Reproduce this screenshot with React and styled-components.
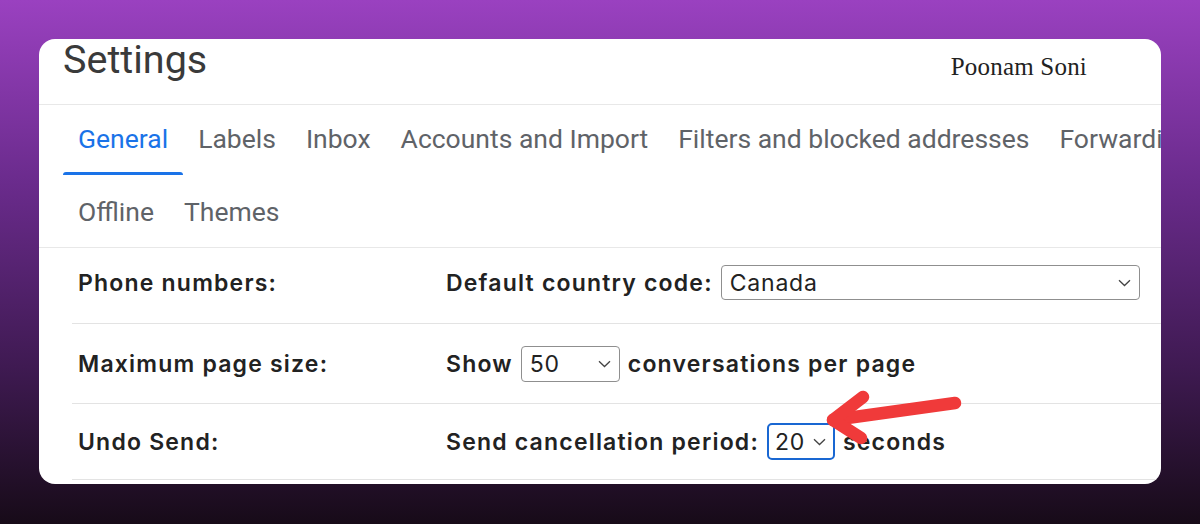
import styled, { createGlobalStyle } from 'styled-components'

const GlobalStyle = createGlobalStyle`
    html, body {
        margin: 0;
        padding: 0;
    }
    body {
        width: 1200px;
        height: 524px;
        overflow: hidden;
        background: linear-gradient(180deg, #9a41c0 0%, #6a2b8c 35%, #3f1a52 70%, #170b18 100%);
        font-family: Inter, "Noto Sans", sans-serif;
    }
`

const Page = styled.div`
    box-sizing: border-box;
    height: 524px;
    padding: 39px 39px 0 39px;
`

const Card = styled.div`
    position: relative;
    height: 445px;
    background: #fff;
    border-radius: 16px;
    overflow: hidden;
`

const Header = styled.div`
    height: 65px;
    display: flex;
    justify-content: space-between;
    align-items: flex-start;
    border-bottom: 1px solid #e8e8e8;
    padding-left: 24px;
    padding-right: 74px;
`

const Title = styled.h1`
    margin: 0;
    font-family: Roboto, sans-serif;
    font-weight: 400;
    font-size: 39.5px;
    line-height: 42px;
    color: #3a3a3a;
`

const Signature = styled.span`
    margin-top: 14px;
    font-family: "Liberation Serif", serif;
    font-size: 25px;
    letter-spacing: 0.2px;
    color: #222;
`

const TabRow = styled.div`
    box-sizing: border-box;
    display: flex;
    height: ${p => p.$height}px;
    padding-left: 24px;
    white-space: nowrap;
    border-bottom: ${p => (p.$divider ? '1px solid #e8e8e8' : 'none')};
`

const Tab = styled.div`
    box-sizing: border-box;
    position: relative;
    display: flex;
    align-items: center;
    padding: 0 15px ${p => p.$lift || 0}px;
    font-family: Roboto, sans-serif;
    font-size: 26.5px;
    color: ${p => (p.$active ? '#1a73e8' : '#5f6368')};

    &::after {
        content: '';
        display: ${p => (p.$active ? 'block' : 'none')};
        position: absolute;
        left: 0;
        right: 0;
        bottom: 0;
        height: 3px;
        border-radius: 3px 3px 0 0;
        background: #1a73e8;
    }
`

const Rows = styled.div`
    padding-left: 33px;
`

const Row = styled.div`
    box-sizing: border-box;
    display: flex;
    align-items: center;
    height: ${p => p.$height}px;
    padding: 0 0 ${p => p.$pb || 0}px 6px;
    border-bottom: 1px solid #e3e3e3;
`

const Label = styled.div`
    width: 368px;
    flex-shrink: 0;
    font-size: 23px;
    font-weight: 600;
    letter-spacing: 1.2px;
    color: #222;
`

const Content = styled.div`
    display: flex;
    align-items: center;
    gap: 8px;
    font-size: 23px;
    font-weight: 600;
    letter-spacing: 1.2px;
    color: #222;
    white-space: nowrap;
`

const SelectBox = styled.div`
    box-sizing: border-box;
    display: flex;
    align-items: center;
    justify-content: space-between;
    width: ${p => p.$width}px;
    height: ${p => p.$height || 36}px;
    padding: 0 ${p => (p.$focus ? 7 : 8)}px 0 ${p => (p.$focus ? 6 : 8)}px;
    border: ${p => (p.$focus ? '2px solid #1967d2' : '1px solid #8f8f8f')};
    border-radius: ${p => (p.$focus ? 5 : 4)}px;
    font-size: 23px;
    font-weight: 400;
    letter-spacing: 0.8px;
    color: #222;
`

const Chevron = () => (
    <svg width="13" height="8" viewBox="0 0 13 8">
        <path d="M1 1.2 L6.5 6.5 L12 1.2" fill="none" stroke="#444" strokeWidth="1.3" />
    </svg>
)

const Select = ({ value, ...rest }) => (
    <SelectBox {...rest}>
        <span>{value}</span>
        <Chevron />
    </SelectBox>
)

const Arrow = styled.svg`
    position: absolute;
    left: 780px;
    top: 350px;
`

const tabs = ['General', 'Labels', 'Inbox', 'Accounts and Import', 'Filters and blocked addresses', 'Forwarding and POP/IMAP']

function App() {
    return (
        <Page>
            <GlobalStyle />
            <Card>
                <Header>
                    <Title>Settings</Title>
                    <Signature>Poonam Soni</Signature>
                </Header>
                <TabRow $height={70}>
                    {tabs.map((t, i) => (
                        <Tab key={t} $active={i === 0} $lift={4}>{t}</Tab>
                    ))}
                </TabRow>
                <TabRow $height={73} $divider>
                    <Tab>Offline</Tab>
                    <Tab>Themes</Tab>
                </TabRow>
                <Rows>
                    <Row $height={76} $pb={6}>
                        <Label>Phone numbers:</Label>
                        <Content>
                            Default country code:
                            <Select value="Canada" $width={419} $height={35} />
                        </Content>
                    </Row>
                    <Row $height={80}>
                        <Label>Maximum page size:</Label>
                        <Content>
                            Show
                            <Select value="50" $width={99} />
                            conversations per page
                        </Content>
                    </Row>
                    <Row $height={76}>
                        <Label>Undo Send:</Label>
                        <Content>
                            Send cancellation period:
                            <Select value="20" $width={68} $height={37} $focus />
                            seconds
                        </Content>
                    </Row>
                    <Row $height={40} />
                </Rows>
                <Arrow width="160" height="70" viewBox="0 0 160 70">
                    <g fill="none" stroke="#f03a3a" strokeWidth="12.5" strokeLinecap="round" strokeLinejoin="round">
                        <path d="M136 14 L14 31" />
                        <path d="M44 8 L14 31 L42 49" />
                    </g>
                </Arrow>
            </Card>
        </Page>
    )
}

export default App
